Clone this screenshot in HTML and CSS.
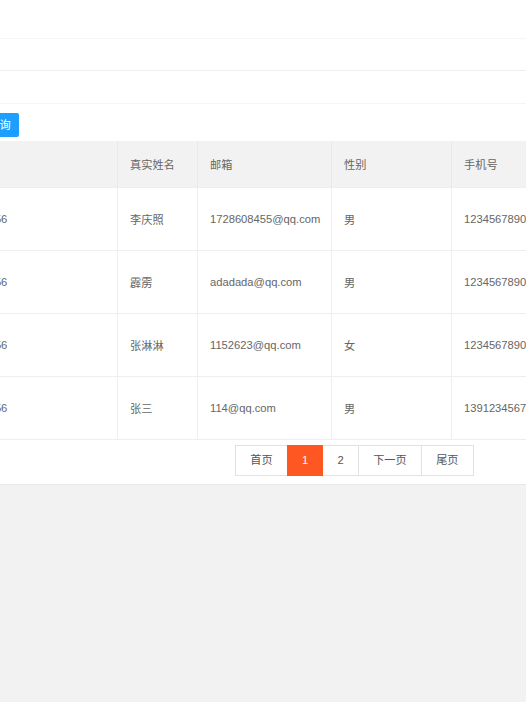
FILE: index.html
```html
<!DOCTYPE html>
<html lang="zh-CN">
<head>
<meta charset="utf-8">
<title>用户列表</title>
<link rel="stylesheet" href="styles.css">
</head>
<body>
<div class="card">
  <div class="form-row r1"></div>
  <div class="form-row r2"></div>
  <div class="form-row r3"></div>
  <div class="toolbar">
    <button class="btn">查询</button>
  </div>
  <div class="table">
    <div class="th">密码</div><div class="th">真实姓名</div><div class="th">邮箱</div><div class="th">性别</div><div class="th">手机号</div>
    <div class="td">123456</div><div class="td">李庆照</div><div class="td">1728608455@qq.com</div><div class="td">男</div><div class="td">1234567890</div>
    <div class="td">123456</div><div class="td">霹雳</div><div class="td">adadada@qq.com</div><div class="td">男</div><div class="td">1234567890</div>
    <div class="td">123456</div><div class="td">张淋淋</div><div class="td">1152623@qq.com</div><div class="td">女</div><div class="td">1234567890</div>
    <div class="td">123456</div><div class="td">张三</div><div class="td">114@qq.com</div><div class="td">男</div><div class="td">1391234567</div>
  </div>
  <div class="pager">
    <a class="pg">首页</a><a class="pg cur">1</a><a class="pg">2</a><a class="pg">下一页</a><a class="pg">尾页</a>
  </div>
</div>
</body>
</html>
```

FILE: styles.css
```css
html, body {
  margin: 0;
  padding: 0;
  overflow: hidden;
  background: #f2f2f2;
  height: 100%;
}
body {
  font-family: "Liberation Sans", Arial, "Noto Sans CJK SC", sans-serif;
  font-size: 11.2px;
  color: #666;
}
.card {
  background: #fff;
  border-bottom: 1px solid #e8e8e8;
  width: 526px;
  overflow: hidden;
}
.form-row {
  border-bottom: 1px solid #f5f5f5;
}
.r1 { height: 38px; }
.r2 { height: 31px; border-bottom-color: #eeeeee; }
.r3 { height: 32px; }
.toolbar {
  padding: 9px 0 4px;
  height: 24px;
}
.btn {
  display: block;
  margin-left: -20px;
  height: 24px;
  width: 39px;
  padding: 0;
  border: none;
  border-radius: 2px;
  background: #1e9fff;
  color: #fff;
  font-family: inherit;
  font-size: 11.2px;
  line-height: 24px;
}
.table {
  display: grid;
  grid-template-columns: 160px 80px 134px 120px 200px;
  margin-left: -42px;
  width: 694px;
}
.th, .td {
  box-sizing: border-box;
  padding: 0 12px;
  border-right: 1px solid #eeeeee;
  border-bottom: 1px solid #eeeeee;
  display: flex;
  align-items: center;
  white-space: nowrap;
}
.th {
  height: 47px;
  background: #f2f2f2;
  border-right-color: #e9e9e9;
}
.td {
  height: 63px;
}
.pager {
  display: flex;
  padding: 5px 0 8px 235px;
}
.pg {
  display: block;
  height: 29px;
  line-height: 29px;
  padding: 0 14.2px;
  border: 1px solid #e2e2e2;
  margin-left: -1px;
  color: #555;
  background: #fff;
}
.pg:first-child { margin-left: 0; }
.pg.cur {
  background: #ff5722;
  border-color: #ff5722;
  color: #fff;
  position: relative;
}
```
